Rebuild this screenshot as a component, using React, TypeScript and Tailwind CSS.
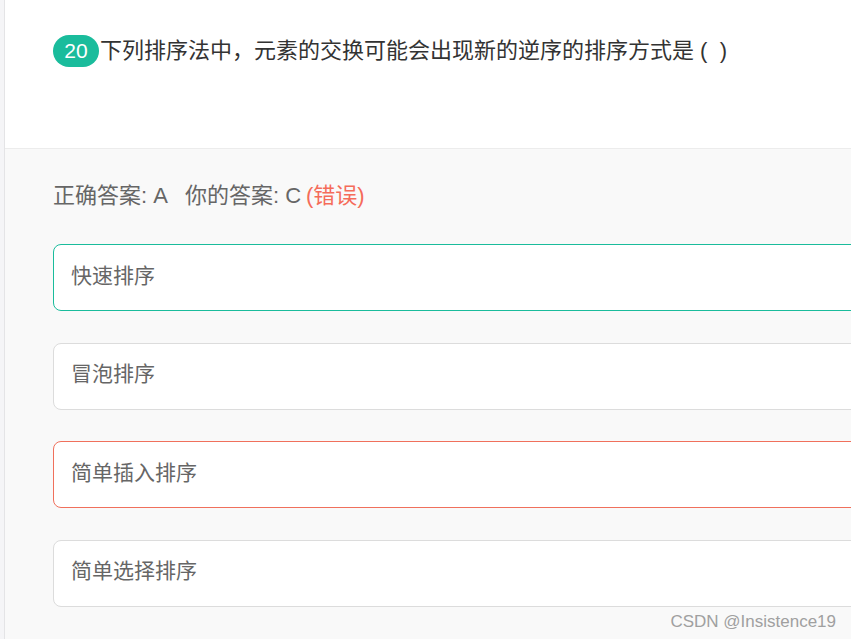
const options = [
  { label: "快速排序", border: "border-[#1abc9c]" },
  { label: "冒泡排序", border: "border-[#dcdcdc]" },
  { label: "简单插入排序", border: "border-[#f0705c]" },
  { label: "简单选择排序", border: "border-[#dcdcdc]" },
];

export default function App() {
  return (
    <div
      className="relative flex h-[639px] w-[851px] overflow-hidden bg-[#f5f5f7]"
      style={{ fontFamily: '"Liberation Sans", "Noto Sans CJK SC", sans-serif' }}
    >
      <div className="w-1 shrink-0" />
      <div className="flex flex-1 flex-col border-l border-[#e4e4e6]">
        {/* question */}
        <div className="h-[149px] shrink-0 border-b border-[#ececec] bg-white px-12 pt-[35px]">
          <div className="flex items-center">
            <span className="flex h-8 w-[46px] items-center justify-center rounded-full bg-[#1abc9c] text-[21px] text-white">
              20
            </span>
            <span className="ml-px text-[22px] leading-8 text-[#333]">
              下列排序法中，元素的交换可能会出现新的逆序的排序方式是 (&nbsp;&nbsp;)
            </span>
          </div>
        </div>

        {/* answer area */}
        <div className="flex-1 bg-[#f9f9f9] px-12 pt-[33px]">
          <div className="flex items-center text-[22px] leading-7 text-[#666]">
            <span>正确答案: A</span>
            <span className="ml-[17px]">你的答案: C</span>
            <span className="ml-[5px] text-[#f56c5a]">(错误)</span>
          </div>
          <div className="mt-[34px] flex w-[900px] flex-col gap-[31.5px]">
            {options.map((o) => (
              <div
                key={o.label}
                className={`flex h-[67px] items-center rounded-lg border bg-white px-[17px] pb-[4px] text-[21px] text-[#666] ${o.border}`}
              >
                {o.label}
              </div>
            ))}
          </div>
        </div>
      </div>

      <span className="absolute bottom-[5px] right-[15px] text-[17px] text-[#a0a0a0]">
        CSDN @Insistence19
      </span>
    </div>
  );
}
